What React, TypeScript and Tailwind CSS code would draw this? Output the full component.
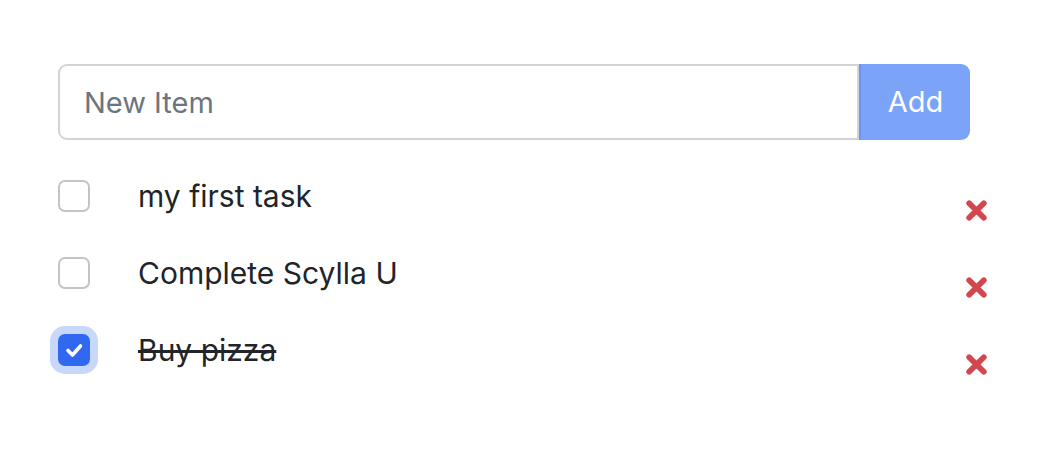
import React, { useState } from 'react'

interface Task {
  id: number
  text: string
  done: boolean
}

const XIcon = () => (
  <svg width="23" height="23" viewBox="0 0 22 22">
    <path d="M4 4 L18 18 M18 4 L4 18" stroke="#d3464d" strokeWidth="5.5" strokeLinecap="round" />
  </svg>
)

const Check = ({ checked, focused }: { checked: boolean; focused?: boolean }) => (
  <div
    className={`w-[32px] h-[32px] flex items-center justify-center rounded-[7px] ${
      checked ? 'bg-[#3068f0]' : 'border-2 border-[#c4c4c4] bg-white'
    } ${focused ? 'ring-[8px] ring-[#c8d8fb]' : ''}`}
  >
    {checked && (
      <svg width="32" height="32" viewBox="0 0 32 32" className="shrink-0">
        <path d="M10 16.5 L14.5 21 L22.5 12" fill="none" stroke="white" strokeWidth="3.6" strokeLinecap="round" strokeLinejoin="round" />
      </svg>
    )}
  </div>
)

export default function App() {
  const [tasks, setTasks] = useState<Task[]>([
    { id: 1, text: 'my first task', done: false },
    { id: 2, text: 'Complete Scylla U', done: false },
    { id: 3, text: 'Buy pizza', done: true }
  ])
  const [value, setValue] = useState('')

  return (
    <div className="w-[1064px] h-[468px] bg-white pt-[64px] pl-[58px]" style={{ fontFamily: 'Inter, "Liberation Sans", sans-serif' }}>
      <div className="flex w-[912px] h-[76px]">
        <input
          value={value}
          onChange={e => setValue(e.target.value)}
          placeholder="New Item"
          className="flex-1 h-full border-2 border-[#d0d4d9] rounded-l-[9px] px-[24px] text-[29px] text-[#212529] placeholder:text-[#6c757d] outline-none"
        />
        <button className="w-[111px] h-full bg-[#7ba3f7] rounded-r-[9px] text-white text-[29px] border-l-2 border-[#6b95f0]">
          Add
        </button>
      </div>

      <div className="mt-[40px] flex flex-col">
        {tasks.map((t, i) => (
          <div key={t.id} className="flex items-start h-[77px] w-[930px]">
            <div className="w-[80px]">
              <Check checked={t.done} focused={i === 2} />
            </div>
            <span
              className={`flex-1 text-[30px] leading-[32px] text-[#212529] ${t.done ? 'line-through' : ''}`}
            >
              {t.text}
            </span>
            <button
              className="mt-[19px]"
              onClick={() => setTasks(tasks.filter(x => x.id !== t.id))}
            >
              <XIcon />
            </button>
          </div>
        ))}
      </div>
    </div>
  )
}
